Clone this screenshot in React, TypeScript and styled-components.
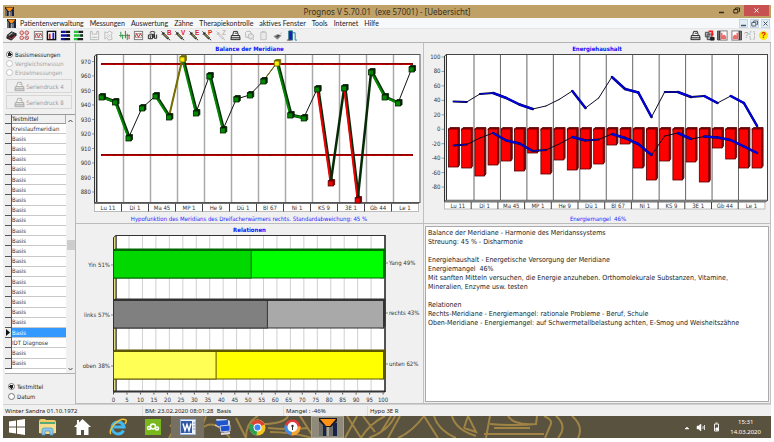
import React, { useState } from 'react';
import styled, { createGlobalStyle } from 'styled-components';

const UI = '"Noto Sans", "Open Sans", sans-serif';
const DIALOG = '"DejaVu Sans Condensed", "DejaVu Sans", sans-serif';

const Global = createGlobalStyle`
  * { box-sizing: border-box; }
  html, body { margin: 0; padding: 0; background: #fff; }
  button, input { font: inherit; color: inherit; margin: 0; padding: 0; }
`;

const Page = styled.div`
  min-height: 100vh;
  padding: 5px 3px 4px;
  display: flex;
  flex-direction: column;
  background: #fff;
  color: #222;
  font-family: ${DIALOG};
  font-size: 7px;
  line-height: 9px;
`;

/* ---------- window frame ---------- */

const TitleBar = styled.header`
  height: 13px;
  display: grid;
  grid-template-columns: 60px 1fr 60px;
  align-items: center;
  background: #bfa168;
  color: #3b3222;
  font-family: ${UI};
`;

const TitleIcon = styled.div`
  padding-left: 2px;
  display: flex;
`;

const Title = styled.h1`
  margin: 0;
  font-size: 8px;
  line-height: 12px;
  font-weight: 400;
  text-align: center;
  white-space: pre;
`;

const Caption = styled.div`
  display: flex;
  align-self: start;
  justify-content: flex-end;
  padding-right: 2px;
`;

const CaptionButton = styled.button<{ $close?: boolean }>`
  width: ${p => (p.$close ? 25 : 15)}px;
  height: 11px;
  border: 0;
  display: flex;
  align-items: center;
  justify-content: center;
  background: ${p => (p.$close ? '#c75050' : 'transparent')};
`;

const MenuBar = styled.nav`
  height: 11px;
  display: flex;
  align-items: center;
  gap: 6px;
  padding: 0 1px 0 4px;
  background: #f6f8fa;
  border-bottom: 1px solid #e6e6e6;
  font-family: Lato, ${UI};
  line-height: 10px;
`;

const MenuIcon = styled.span`
  display: flex;
  margin-right: -2px;
`;

const MenuItem = styled.button`
  border: 0;
  background: none;
  white-space: nowrap;
`;

const ChildCaption = styled.div`
  display: flex;
  gap: 2px;
  margin-left: auto;
`;

const ChildButton = styled.button`
  width: 9px;
  height: 9px;
  display: flex;
  align-items: center;
  justify-content: center;
  border: 1px solid #c3d5e6;
  background: #e3edf6;
`;

const ToolBar = styled.div`
  height: 14px;
  display: flex;
  align-items: center;
  padding: 0 1px 1px 2px;
  background: #f0f0f0;
  border-bottom: 1px solid #b4b4b4;
`;

const ToolGroup = styled.div<{ $width: number; $right?: boolean }>`
  width: ${p => p.$width}px;
  display: flex;
  justify-content: space-between;
  margin-left: ${p => (p.$right ? 'auto' : '0')};
  margin-right: ${p => (p.$right ? 0 : 3)}px;
`;

const Tool = styled.button`
  width: 13px;
  height: 12px;
  border: 0;
  background: none;
  display: flex;
  align-items: center;
  justify-content: center;
`;

/* ---------- body ---------- */

const Body = styled.main`
  flex: 1;
  display: grid;
  grid-template-columns: 73px minmax(0, 348fr) minmax(0, 347fr);
  background: #f0f0f0;
`;

const Side = styled.aside`
  display: flex;
  flex-direction: column;
  border-right: 1px solid #b8b8b8;
  overflow: hidden;
`;

const Radios = styled.fieldset<{ $bottom?: boolean }>`
  margin: 0;
  border: 0;
  min-width: 0;
  padding: ${p => (p.$bottom ? '8px 0 3px 5px' : '7px 0 0 3px')};
  display: flex;
  flex-direction: column;
  gap: ${p => (p.$bottom ? 1 : 0)}px;
`;

const RadioLabel = styled.label<{ $off?: boolean }>`
  display: flex;
  align-items: center;
  gap: 2px;
  height: 9px;
  white-space: nowrap;
  font-size: 6px;
  color: ${p => (p.$off ? '#a3a3a3' : '#222')};
`;

const Radio = styled.input`
  appearance: none;
  flex: none;
  width: 7px;
  height: 7px;
  border: 1px solid #777;
  border-radius: 50%;
  background: #fff;
  &:checked { background: radial-gradient(circle, #222 0 2px, #fff 2px); }
  &:disabled { border-color: #c4c4c4; }
`;

const Prints = styled.div`
  display: flex;
  flex-direction: column;
  gap: 2px;
  padding: 2px 3px 5px;
`;

const PrintButton = styled.button`
  height: 14px;
  display: flex;
  align-items: center;
  justify-content: center;
  gap: 1px;
  border: 1px solid #d6d6d6;
  background: #efefef;
  color: #9a9a9a;
  font-size: 6px;
`;

const ListBox = styled.div`
  display: flex;
  flex: 1;
  margin-left: 2px;
  background: #fff;
  border-top: 1px solid #9a9a9a;
  border-bottom: 1px solid #b0b0b0;
`;

const Table = styled.table`
  flex: 1;
  height: 254px;
  border-collapse: separate;
  border-spacing: 0;
  table-layout: fixed;
  font-size: 6px;
  line-height: 8px;
  th, td { padding: 0; }
`;

const Marker = styled.td`
  width: 7px;
  background: #eee;
  border-right: 1px solid #555;
  border-bottom: 1px solid #555;
`;

const HeadMarker = styled(Marker).attrs({ as: 'th' })``;

const Head = styled.th`
  text-align: left;
  font-weight: 400;
  background: #f0f0f0;
  border-bottom: 1px solid #999;
  border-right: 1px solid #aaa;
`;

const Cell = styled.td<{ $on?: boolean }>`
  white-space: nowrap;
  background: ${p => (p.$on ? '#3399ff' : '#fff')};
  color: ${p => (p.$on ? '#fff' : '#333')};
  border-bottom: 1px solid #c8c8c8;
`;

const ScrollBar = styled.div`
  width: 9px;
  display: flex;
  flex-direction: column;
  align-items: center;
  justify-content: space-between;
  padding: 3px 0 1px;
  background: #f0f0f0;
`;

const Arrow = styled.button`
  width: 9px;
  height: 6px;
  border: 0;
  background: none;
  display: flex;
  align-items: center;
  justify-content: center;
`;

const Thumb = styled.span`
  width: 8px;
  height: 10px;
  background: #cdcdcd;
`;

const Column = styled.div`
  display: grid;
  grid-template-rows: 181fr 180fr;
  min-width: 0;
  border-right: 1px solid #c0c0c0;
`;

const Panel = styled.section`
  min-width: 0;
  display: flex;
  border-bottom: 1px solid #bcbcbc;
`;

const Chart = styled.svg`
  display: block;
  width: 100%;
  height: 100%;
  font-family: ${DIALOG};
  font-size: 6px;
  fill: #333;
`;

const MemoPanel = styled(Panel)`
  padding: 2px 1px 1px 1px;
`;

const Memo = styled.div`
  flex: 1;
  background: #fff;
  border: 1px solid #aaa;
  padding: 2px 2px;
  color: #222;
  p { margin: 0; white-space: pre-line; }
  p + p { margin-top: 9px; }
`;

const StatusBar = styled.footer`
  height: 12px;
  display: grid;
  grid-template-columns: 140px 141px 84px 1fr;
  align-items: center;
  background: #f0f0f0;
  border-top: 1px solid #d0d0d0;
  font-family: ${UI};
  font-size: 6px;
  line-height: 10px;
  white-space: pre;
`;

const StatusCell = styled.span`
  padding-left: 2px;
  border-right: 1px solid #ddd;
  &:last-child { border: 0; }
`;

/* ---------- task bar ---------- */

const TaskBar = styled.div`
  height: 22px;
  display: grid;
  background: #59523f;
  overflow: hidden;
  > * { grid-area: 1 / 1; }
`;

const Ornament = styled.svg`
  height: 22px;
  width: 768px;
`;

const TaskRow = styled.div`
  display: flex;
  align-items: center;
  z-index: 1;
`;

const Task = styled.button<{ $active?: boolean; $open?: boolean }>`
  width: 33px;
  height: 22px;
  margin-right: 2px;
  display: flex;
  align-items: center;
  justify-content: center;
  border: 1px solid ${p => (p.$active ? '#a5a092' : 'transparent')};
  background: ${p => (p.$active ? '#8f8a7a' : p.$open ? '#757061' : 'transparent')};
  &:first-child { width: 28px; margin-right: 0; }
`;

const Tray = styled.div`
  margin-left: auto;
  padding-right: 10px;
  display: flex;
  align-items: center;
  gap: 10px;
  color: #fff;
  font-family: ${UI};
  font-size: 6px;
  line-height: 10px;
  text-align: center;
`;

const TrayIcons = styled.svg`
  width: 36px;
  height: 10px;
`;

/* ---------- icons ---------- */

const Logo = ({ size = 9 }: { size?: number }) => (
  <svg width={size} height={size} viewBox="0 0 18 18">
    <path d="M0 0h18v18H0z" fill="#6f6e68" />
    <path d="M0 0h18v3l-6 6H6L0 3z" fill="#14161f" />
    <path d="M4 7h3v11H4zM14 5h4v13h-4z" fill="#16224a" />
    <path d="M8 9h2v9H8z" fill="#a9a79c" />
    <path d="M1 1h16l-6 7H7z" fill="#ff9114" />
  </svg>
);

const Svg = ({ children, w = 11 }: { children: React.ReactNode; w?: number }) => (
  <svg width={w} height={w} viewBox="0 0 12 12" fill="none" stroke="#222" strokeWidth="1">{children}</svg>
);

const Printer = ({ c = '#222', w = 11 }: { c?: string; w?: number }) => (
  <Svg w={w}>
    <path d="M3 5.5L4 1.5h4l1 4" stroke={c} fill="#fff" />
    <path d="M1.5 6h9l.5 4.5H1z" stroke={c} fill="#ddd" />
    <path d="M1 8.5h10M5 3.5h3" stroke={c} />
  </Svg>
);

const Syringe = ({ letter, color, c = '#222' }: { letter: string; color: string; c?: string }) => (
  <Svg>
    <path d="M0.5 1.5l2 2" stroke={c} />
    <path d="M2 3.500l6 6" stroke={c} strokeWidth="2.500" />
    <path d="M3 4.500l4.500 4.500" stroke={c === '#222' ? '#d9d36a' : '#fff'} strokeWidth="1" />
    <path d="M8 9.500l2 1.500M1 5L3.500 2.500" stroke={c} strokeWidth="1" />
    <text x="6.500" y="5.500" fontSize="7" fontWeight="700" fill={color} stroke="none" fontFamily="Liberation Sans, sans-serif">{letter}</text>
  </Svg>
);

const Bars = ({ a, b }: { a: string; b: string }) => (
  <Svg>
    <path d="M1 2h5M1 6h8M1 10h5" stroke={a} strokeWidth="2.500" />
    <path d="M6 2h5M8 6h3M5 10h6" stroke={b} strokeWidth="2.500" />
  </Svg>
);

const GraphIcon = () => (
  <Svg>
    <rect x="1.500" y="1.500" width="9" height="9" fill="#f7f7f7" stroke="#777" />
    <path d="M1 4h10M1 8h10" stroke="#999" />
    <path d="M2 8l2-4 2 4 2-4 2 3" stroke="#c92b2b" />
  </Svg>
);

const DoorIcon = ({ flip = false }: { flip?: boolean }) => (
  <Svg>
    <rect x="1" y="1" width="10" height="10" fill="#fff" stroke="#777" />
    <path d={flip ? 'M9 1v10M11 1v10' : 'M1 1v10M3 1v10'} stroke="#333" strokeWidth="1.500" />
    <path d={flip ? 'M2 10V7l2-2 2 1V3h2v7z' : 'M4 10V3h2v3l2-1 2 2v3z'} fill="#ee6b6b" stroke="none" />
  </Svg>
);

const leftTools: [string, React.ReactNode][] = [
  ['Patient', <Svg><path d="M1 6l5-4 5 2-5 5z" fill="#444" /><path d="M1 7v2l5 2 5-5V4" fill="#222" /><path d="M3 8l3 1.500L10 6" stroke="#d34" /><path d="M3 6l4-3" stroke="#ccc" /></Svg>],
  ['Zellen', <Svg><g stroke="#c24b4b" fill="#e9c9c9"><circle cx="3" cy="3" r="2" /><circle cx="8.500" cy="3" r="2" /><circle cx="3" cy="8.500" r="2" /><circle cx="8.500" cy="8.500" r="2" /></g><path d="M3 3v0M8 8l1 1" stroke="#357" /></Svg>],
  ['Kurve', <GraphIcon />],
  ['Balken', <Svg><rect x="1.500" y="1.500" width="9" height="9" fill="#fff" stroke="#111" strokeWidth="1.500" /><path d="M4 10V4" stroke="#c22" strokeWidth="2" /><path d="M8 10V3" stroke="#22c" strokeWidth="2" /></Svg>],
  ['Relationen', <Bars a="#11119a" b="#111" />],
  ['Vergleich', <Bars a="#22c53a" b="#222" />],
];
const midTools: [string, React.ReactNode][] = [
  ['Speichern', <Svg><path d="M1.500 1.500h2v3h5v-3h2v9h-9z" stroke="#b8b8b8" /><path d="M3 8h6" stroke="#b8b8b8" /></Svg>],
  ['Zahn', <Svg><path d="M2 2l3 1 2-2 3 2-1 3 1 4-4 1-2-3-2 2z" stroke="#bbb" /><path d="M5 4l3 3M4 6l3 2" stroke="#c8c8c8" /></Svg>],
];
const mainTools: [string, React.ReactNode][] = [
  ['Messung', <Svg><path d="M0 6h12" stroke="#5aa868" /><path d="M2 2v6M4 5v5M9 4v7" stroke="#1f8c35" /><path d="M7 1v8M11 5v5" stroke="#b33" /></Svg>],
  ['Verlauf', <GraphIcon />],
  ['Suche', <Svg><path d="M1.500 5v4.500h3M3 4.500h3v5h-2zM8 3v6h2.500V5" /><path d="M3 2.500l3-1 3 1" /><circle cx="7" cy="6.500" r="1.500" fill="#555" /></Svg>],
  ['Spritze B', <Syringe letter="B" color="#d22" />],
  ['Spritze V', <Syringe letter="V" color="#d22" />],
  ['Spritze E', <Syringe letter="E" color="#d22" />],
  ['Spritze P', <Syringe letter="P" color="#d22" />],
  ['Spritze Z', <Syringe letter="Z" color="#bbb" c="#bbb" />],
  ['Drucken', <Printer />],
  ['Kopieren', <Svg><path d="M1.500 3L3 1.500h4L8 4v4H2z" stroke="#b5b5b5" /><circle cx="7.500" cy="7" r="3" stroke="#b5b5b5" fill="#e4e4e4" /><path d="M9 9l2 2" stroke="#b5b5b5" /></Svg>],
  ['Ablage', <Svg><path d="M3 2.500h6v8H3zM4 1.500h4" stroke="#c0c0c0" fill="#e9e9e9" /></Svg>],
  ['Testen', <Svg><path d="M2 7l4-2 4 1-4 4z" fill="#777" stroke="#999" /><path d="M5 7l3-1" stroke="#222" /><path d="M9 4l2-1" stroke="#bbb" /></Svg>],
  ['Beenden', <Svg><path d="M3 1h4v10H3z" fill="#201ab0" stroke="#187878" /><path d="M7 3h3v8h2" stroke="#27a" /><path d="M1 11h3" stroke="#b22" /></Svg>],
];
const rightTools: [string, React.ReactNode][] = [
  ['Drucken', <Printer />],
  ['Export', <Svg><path d="M1.500 2.500h4v5h-4zM3.500 4.500h5v6h-5z" fill="#bbb" stroke="#444" /><path d="M5 1.500h4v4" stroke="#e22" strokeWidth="2" /><path d="M7 4l2 3 2-3z" fill="#e22" stroke="none" /><path d="M7 8h4v3H7z" fill="#222" /></Svg>],
  ['Links', <DoorIcon />],
  ['Rechts', <DoorIcon flip />],
  ['Kontext', <Svg><text x="0" y="9" fontSize="9" fill="#999" stroke="none" fontFamily="Liberation Sans, sans-serif">?</text><path d="M8 2H6.500v8H8M10 2h1.500v8H10" stroke="#aaa" strokeDasharray="2 1" /></Svg>],
  ['Hilfe', <Svg><circle cx="6" cy="6" r="4.500" fill="#ffee00" stroke="#f4d800" strokeWidth=".5" /><text x="6" y="9" textAnchor="middle" fontSize="9" fontWeight="700" fill="#e01010" stroke="none" fontFamily="Liberation Sans, sans-serif">?</text></Svg>],
];

/* ---------- charts ---------- */

const meridians = ['Lu 11', 'Di 1', 'Ma 45', 'MP 1', 'He 9', 'Dü 1', 'Bl 67', 'Ni 1', 'KS 9', '3E 1', 'Gb 44', 'Le 1'];

const balanceY = [97, 102, 138, 108, 96, 117, 59, 113, 76, 130, 99, 95, 81, 63, 115, 118, 89, 183, 88, 200, 72, 97, 103, 69];
const energyY = [101.5, 102, 94, 93, 98, 104.5, 109, 106, 99.5, 91, 108, 98, 77, 89, 92.5, 117, 92, 92, 97, 96, 103, 96, 103, 126];
const deficitY = [145.5, 144.500, 138, 133, 140.5, 143.5, 151, 150, 144, 137, 140.5, 139.5, 134, 138, 144, 155, 136, 133, 139, 136.5, 137.5, 140, 146.5, 153];
const barY = [167, 168, 176, 165, 161, 171, 153, 174, 160, 170, 169, 164, 145, 144, 168, 180, 161, 180, 162, 182, 148, 159, 168, 168];

const bx = (i: number) => 101.5 + i * 13.48;
const ex = (i: number) => 453.5 + i * 13.2;

const AxisBoxes = ({ x, y, step, h }: { x: number; y: number; step: number; h: number }) => (
  <g>
    <rect x={x} y={y} width={step * 12} height={h} fill="#fff" stroke="#bbb" />
    {meridians.map((m, i) => (
      <g key={m}>
        {i > 0 && <path d={`M${x + i * step} ${y}v${h}`} stroke="#444" />}
        <text x={x + (i + 0.5) * step} y={y + h / 2 + 2} textAnchor="middle">{m}</text>
      </g>
    ))}
  </g>
);

const BalanceChart = () => {
  const segs = balanceY.slice(1).map((y, i) => {
    const down = y > balanceY[i];
    const yellow = i === 5 || i === 12;
    const red = i === 16 || i === 18;
    const steep = i === 17 || i === 19;
    const d = `M${bx(i)} ${balanceY[i]}L${bx(i + 1)} ${y}`;
    return (
      <g key={i} fill="none">
        <path d={d} stroke={down || steep ? '#062a06' : '#111'} strokeWidth={down ? 3 : steep ? 2.5 : 1} transform={down ? 'translate(1 0)' : undefined} />
        {down && <path d={d} stroke={red ? '#f00000' : '#008a00'} strokeWidth="2" />}
        {yellow && <path d={d} stroke="#777000" strokeWidth={i === 5 ? 2 : 1} />}
      </g>
    );
  });
  return (
    <Chart viewBox="76 43 347 179" preserveAspectRatio="xMidYMin meet" role="img" aria-label="Balance der Meridiane">
      <text x="249.500" y="50.500" textAnchor="middle" fontWeight="700" fill="#1010ff">Balance der Meridiane</text>
      <rect x="97" y="54.500" width="323" height="148" fill="#fff" stroke="#555" />
      {meridians.slice(1).map((m, i) => <path key={m} d={`M${123.500 + i * 27} 55v147`} stroke="#aaa" strokeWidth="1.500" />)}
      <path d="M94.500 56l2-1.500V202l-2 1z" fill="#f5f087" stroke="#333" />
      {[970, 960, 950, 940, 930, 920, 910, 900, 890, 880].map((v, i) => (
        <g key={v}>
          <text x="91" y={63.5 + i * 14.5} textAnchor="end">{v}</text>
          <path d={`M92 ${61.5 + i * 14.5}h2`} stroke="#999" />
        </g>
      ))}
      <AxisBoxes x={94.5} y={203.5} step={27} h={8} />
      <path d="M94 203h325" stroke="#555" strokeWidth="1.500" />
      {[64.5, 155.5].map(y => (
        <g key={y}>
          <path d={`M101 ${y - 0.5}h312`} stroke="#8c0000" strokeWidth="2" />
          <path d={`M102 ${y}h311`} stroke="#c00000" strokeWidth="1" strokeDasharray="11 2" />
        </g>
      ))}
      {segs}
      {balanceY.map((y, i) => {
        const c = i === 6 || i === 13 ? ['#fff000', '#6d6600'] : i === 17 || i === 19 ? ['#f00000', '#600000'] : ['#008a00', '#022002'];
        return (
          <g key={i} stroke={c[1]} strokeWidth=".8">
            <path d={`M${bx(i) - 2.5} ${y - 2}l1.500 -1.500h5v5l-1.500 1.500z`} fill={c[1]} />
            <rect x={bx(i) - 2.5} y={y - 2} width="5" height="5" fill={c[0]} />
          </g>
        );
      })}
      <text x="249" y="221" textAnchor="middle" fill="#2626ff">Hypofunktion des Meridians des Dreifacherwärmers rechts. Standardabweichung: 45 %</text>
    </Chart>
  );
};

const Ribbon = ({ ys }: { ys: number[] }) => (
  <g fill="none" strokeLinecap="round">
    {ys.slice(1).map((y, i) => {
      const d = `M${ex(i)} ${ys[i]}L${ex(i + 1)} ${y}`;
      const down = y > ys[i] + 0.8;
      const flat = Math.abs(y - ys[i]) <= 1.6;
      return (
        <g key={i}>
          <path d={d} stroke="#0a0a28" strokeWidth={down ? 2.5 : flat ? 2 : 1} />
          {(down || flat) && <path d={d} stroke="#0000e0" strokeWidth={down ? 2 : 1} />}
        </g>
      );
    })}
  </g>
);

const EnergyChart = () => (
  <Chart viewBox="424 43 346 179" preserveAspectRatio="xMidYMin meet" role="img" aria-label="Energiehaushalt">
    <text x="597" y="50.500" textAnchor="middle" fontWeight="700" fill="#1010ff">Energiehaushalt</text>
    <rect x="446.500" y="54.500" width="321" height="146" fill="#fff" stroke="#444" />
    {meridians.slice(1).map((m, i) => <path key={m} d={`M${474 + i * 26.45} 55v146`} stroke="#666" />)}
    <path d="M444.500 56l2-1.500V200l-2 2z" fill="#f5f087" stroke="#333" />
    {[100, 80, 60, 40, 20, 0, -20, -40, -60, -80].map((v, i) => (
      <g key={v}>
        <text x="440.500" y={59 + i * 14.45} textAnchor="end">{v}</text>
        <path d={`M441.500 ${57 + i * 14.45}h2.500`} stroke="#999" />
      </g>
    ))}
    <AxisBoxes x={444.5} y={202} step={26.7} h={7} />
    <path d="M446 200h322l-2 2H444z" fill="#888" stroke="#555" strokeWidth=".5" />
    {barY.map((b, i) => {
      const x = ex(i) - 5;
      return (
        <g key={i} stroke="#500000" strokeWidth=".8">
          <path d={`M${x} 129l1.500 -1.500h9.500V${b - 2}l-1.500 2z`} fill="#900000" />
          <rect x={x} y="129" width="9.500" height={b - 129} fill="#ff0000" />
        </g>
      );
    })}
    <Ribbon ys={energyY} />
    <Ribbon ys={deficitY} />
    <text x="598" y="221" textAnchor="middle" fill="#2626ff" xmlSpace="preserve">Energiemangel  46%</text>
  </Chart>
);

const relations = [
  { y: 250.5, l: 'Yin 51%', r: 'Yang 49%', split: 51, a: '#00d800', b: '#00ff00', dark: '#006800' },
  { y: 300.5, l: 'links 57%', r: 'rechts 43%', split: 57, a: '#808080', b: '#a9a9a9', dark: '#333333' },
  { y: 351.5, l: 'oben 38%', r: 'unten 62%', split: 38, a: '#ffff55', b: '#ffff00', dark: '#5c5600' },
];

const RelationChart = () => (
  <Chart viewBox="76 224 347 179" preserveAspectRatio="xMidYMin meet" role="img" aria-label="Relationen">
    <text x="249.500" y="231.500" textAnchor="middle" fontWeight="700" fill="#1010ff">Relationen</text>
    <rect x="116" y="235.500" width="269" height="156" fill="#fff" stroke="#333" />
    {Array.from({ length: 19 }, (_, i) => <path key={i} d={`M${129 + i * 13.45} 236v155`} stroke="#d0d0d0" />)}
    <path d="M113.500 237.500l2.500-2V391l-2.500 1.500z" fill="#e0da80" stroke="#333" />
    <path d="M113 391.500h272" stroke="#333" strokeWidth="2" />
    <path d="M385 235v157" stroke="#111" />
    {relations.map(r => {
      const split = 113.5 + r.split * 2.7;
      return (
        <g key={r.l}>
          <path d={`M113.500 ${r.y}l1.500-1.500h270v27l-1.500 2z`} fill={r.dark} stroke={r.dark} />
          <rect x="113.500" y={r.y} width="270" height="27.500" fill={r.b} stroke={r.dark} />
          <rect x="113.500" y={r.y} width={split - 113.5} height="27.500" fill={r.a} stroke={r.dark} />
          <text x="110" y={r.y + 16.5} textAnchor="end">{r.l}</text>
          <text x="389" y={r.y + 14.5}>{r.r}</text>
          <path d={`M111 ${r.y + 14.5}h2M386 ${r.y + 12.5}h2`} stroke="#888" />
        </g>
      );
    })}
    {Array.from({ length: 21 }, (_, i) => (
      <g key={i}>
        <path d={`M${113.5 + i * 13.48} 392.500v2`} stroke="#555" />
        <text x={113.5 + i * 13.48} y="401.500" textAnchor="middle">{i * 5}</text>
      </g>
    ))}
  </Chart>
);

/* ---------- page ---------- */

const tests = ['Kreislaufmeridian', ...Array(19).fill('Basis'), 'Basis', 'IDT Diagnose', 'Basis', 'Basis'];
const menus = ['Patientenverwaltung', 'Messungen', 'Auswertung', 'Zähne', 'Therapiekontrolle', 'aktives Fenster', 'Tools', 'Internet', 'Hilfe'];

const Tools = ({ items, width, right }: { items: [string, React.ReactNode][]; width: number; right?: boolean }) => (
  <ToolGroup $width={width} $right={right}>
    {items.map(([name, icon]) => <Tool key={name} aria-label={name}>{icon}</Tool>)}
  </ToolGroup>
);

const MinGlyph = ({ c }: { c: string }) => <svg width="7" height="7"><path d="M1 5.500h5" stroke={c} strokeWidth="1.500" /></svg>;
const RestoreGlyph = ({ c }: { c: string }) => <svg width="7" height="7"><path d="M2.500 2V1h4v3.500h-1M.8 2.500h4v3.500h-4z" fill="none" stroke={c} /></svg>;
const CloseGlyph = ({ c }: { c: string }) => <svg width="7" height="7"><path d="M1.500 1.500l4 4M5.500 1.500l-4 4" stroke={c} /></svg>;

const tasks: { name: string; open?: boolean; active?: boolean; icon: React.ReactNode }[] = [
  { name: 'Start', icon: <svg width="16" height="16" viewBox="0 0 16 16" fill="#fff"><path d="M0 2.500l7-1v6H0zM8 1.300L16 0v7.500H8zM0 8.500h7v6l-7-1zM8 8.500h8V16l-8-1.300z" /></svg> },
  { name: 'Explorer', icon: <svg width="19" height="18" viewBox="0 0 19 18"><path d="M1 3q0-2 2-2h4l1 1h8q2 0 2 2v11H1z" fill="#eecb66" /><path d="M2 4h15v2H2z" fill="#5aa876" /><path d="M1 6h17v9q-8 2-17 0z" fill="#f6dd8e" /><path d="M4 17v-5q0-2 2-2h7q2 0 2 2v5h-3v-4H7v4z" fill="#8cc8ea" stroke="#4a93c4" strokeWidth=".7" /></svg> },
  { name: 'Home', icon: <svg width="17" height="16" viewBox="0 0 17 16"><path d="M8.500 0L17 8h-2.500v8H10v-5H7v5H2.500V8H0l3-3V1h2v2.500z" fill="#fff" /></svg> },
  { name: 'Internet Explorer', icon: <svg width="18" height="18" viewBox="0 0 18 18" fill="none"><path d="M14.500 12.500A6 6 0 1 1 15 9H5" stroke="#42b8ee" strokeWidth="3" /><path d="M2 16C-2 12 11-2 17 2q1 1-1 4" stroke="#f2c032" strokeWidth="1.500" /></svg> },
  { name: 'Cloud', icon: <svg width="16" height="16" viewBox="0 0 16 16"><rect width="16" height="16" fill="#78b81c" /><g fill="none" stroke="#fff" strokeWidth="1.500"><circle cx="4" cy="9" r="1.500" /><circle cx="8" cy="7.500" r="2.500" /><circle cx="12" cy="9.500" r="1.500" /></g></svg> },
  { name: 'Word', open: true, icon: <svg width="16" height="16" viewBox="0 0 16 16"><rect x=".5" y=".5" width="15" height="15" fill="#eef3fb" stroke="#9eb6da" /><rect x="1" y="2" width="11" height="12" fill="#315aa5" /><path d="M13 4h2M13 7h2M13 10h2" stroke="#7f9bc9" /><path d="M3 4.500l2 7 2-6 2 6 2-7" fill="none" stroke="#fff" strokeWidth="1.500" /></svg> },
  { name: 'Remote', icon: <svg width="18" height="18" viewBox="0 0 18 18"><path d="M2 1h10l4 2v4H4z" fill="#c9d4e4" /><path d="M2 3l12-1v7L3 8z" fill="#2055d0" /><path d="M1 7l4 2" stroke="#dde4ee" /><path d="M6 8l10-1v6l-9 1z" fill="#1e4fd0" stroke="#c6d0dd" /><path d="M7 16l9-1" stroke="#dde" strokeWidth="2" /></svg> },
  { name: 'Chrome', icon: <svg width="17" height="17" viewBox="0 0 17 17"><circle cx="8.500" cy="8.500" r="8" fill="#f4c51d" /><path d="M8.500 8.500L1.500 4.500a8 8 0 0 1 14.200 1z" fill="#db4437" /><path d="M8.500 8.500L1.500 4.500A8 8 0 0 0 7.500 16.400z" fill="#27a158" /><circle cx="8.500" cy="8.500" r="4" fill="#fff" /><circle cx="8.500" cy="8.500" r="3" fill="#4285f4" /></svg> },
  { name: 'Browser', icon: <svg width="17" height="17" viewBox="0 0 17 17"><circle cx="8.500" cy="8.500" r="8" fill="#e23b3b" /><path d="M8.500 8.500L.8 6A8 8 0 0 0 7.500 16.500z" fill="#3f8fe0" /><path d="M8.500 8.500L7.500 16.500A8 8 0 0 0 16.400 7z" fill="#f2a735" /><circle cx="8.500" cy="8" r="5" fill="#fff" /><circle cx="8.500" cy="7" r="1.200" fill="#333" /><path d="M8.500 7v4" stroke="#333" /></svg> },
  { name: 'Prognos', active: true, icon: <Logo size={18} /> },
];

export default function App() {
  const [kind, setKind] = useState('basis');
  const [sort, setSort] = useState('test');
  const [row, setRow] = useState(20);
  return (
    <Page>
      <Global />
      <TitleBar>
        <TitleIcon><Logo /></TitleIcon>
        <Title>Prognos V 5.70.01  (exe 57001) - [Uebersicht]</Title>
        <Caption>
          <CaptionButton aria-label="Minimieren"><MinGlyph c="#332b1a" /></CaptionButton>
          <CaptionButton aria-label="Wiederherstellen"><RestoreGlyph c="#332b1a" /></CaptionButton>
          <CaptionButton $close aria-label="Schließen"><CloseGlyph c="#fff" /></CaptionButton>
        </Caption>
      </TitleBar>
      <MenuBar>
        <MenuIcon><Logo /></MenuIcon>
        {menus.map(m => <MenuItem key={m}>{m}</MenuItem>)}
        <ChildCaption>
          <ChildButton aria-label="Fenster minimieren"><MinGlyph c="#456" /></ChildButton>
          <ChildButton aria-label="Fenster wiederherstellen"><RestoreGlyph c="#567" /></ChildButton>
          <ChildButton aria-label="Fenster schließen"><CloseGlyph c="#456" /></ChildButton>
        </ChildCaption>
      </MenuBar>
      <ToolBar>
        <Tools items={leftTools} width={80} />
        <Tools items={midTools} width={27} />
        <Tools items={mainTools} width={180} />
        <Tools items={rightTools} width={81} right />
      </ToolBar>
      <Body>
        <Side>
          <Radios aria-label="Messungen">
            <RadioLabel><Radio type="radio" name="kind" checked={kind === 'basis'} onChange={() => setKind('basis')} />Basismessungen</RadioLabel>
            <RadioLabel $off><Radio type="radio" name="kind" disabled />Vergleichsmessun</RadioLabel>
            <RadioLabel $off><Radio type="radio" name="kind" disabled />Einzelmessungen</RadioLabel>
          </Radios>
          <Prints>
            <PrintButton><Printer c="#aaa" />Seriendruck 4</PrintButton>
            <PrintButton><Printer c="#aaa" />Seriendruck 8</PrintButton>
          </Prints>
          <ListBox>
            <Table>
              <thead><tr><HeadMarker /><Head>Testmittel</Head></tr></thead>
              <tbody>
                {tests.map((t, i) => (
                  <tr key={i} onClick={() => setRow(i)}>
                    <Marker>{i === row && <svg width="5" height="7" viewBox="0 0 5 7" display="block"><path d="M1 0l4 3.500-4 3.500z" fill="#111" /></svg>}</Marker>
                    <Cell $on={i === row}>{t}</Cell>
                  </tr>
                ))}
              </tbody>
            </Table>
            <ScrollBar>
              <Arrow aria-label="Nach oben"><svg width="5" height="4"><path d="M.5 3l2-2 2 2" fill="none" stroke="#444" /></svg></Arrow>
              <Thumb />
              <Arrow aria-label="Nach unten"><svg width="5" height="4"><path d="M.5 1l2 2 2-2" fill="none" stroke="#444" /></svg></Arrow>
            </ScrollBar>
          </ListBox>
          <Radios $bottom aria-label="Sortierung">
            <RadioLabel><Radio type="radio" name="sort" checked={sort === 'test'} onChange={() => setSort('test')} />Testmittel</RadioLabel>
            <RadioLabel><Radio type="radio" name="sort" checked={sort === 'date'} onChange={() => setSort('date')} />Datum</RadioLabel>
          </Radios>
        </Side>
        <Column>
          <Panel><BalanceChart /></Panel>
          <Panel><RelationChart /></Panel>
        </Column>
        <Column>
          <Panel><EnergyChart /></Panel>
          <MemoPanel>
            <Memo>
              <p>{'Balance der Meridiane - Harmonie des Meridanssystems\nStreuung: 45 % - Disharmonie'}</p>
              <p>{'Energiehaushalt - Energetische Versorgung der Meridiane\nEnergiemangel\u00a0 46%\nMit sanften Mitteln versuchen, die Energie anzuheben. Orthomolekurale Substanzen, Vitamine,\nMineralien, Enzyme usw. testen'}</p>
              <p>{'Relationen\nRechts-Meridiane - Energiemangel: rationale Probleme - Beruf, Schule\nOben-Meridiane - Energiemangel: auf Schwermetallbelastung achten, E-Smog und Weisheitszähne'}</p>
            </Memo>
          </MemoPanel>
        </Column>
      </Body>
      <StatusBar>
        <StatusCell>Winter Sandra 01.10.1972</StatusCell>
        <StatusCell>BM: 23.02.2020 08:01:28  Basis</StatusCell>
        <StatusCell>Mangel : -46%</StatusCell>
        <StatusCell>Hypo 3E R</StatusCell>
      </StatusBar>
      <TaskBar>
        <Ornament viewBox="3 416 768 22" fill="none" stroke="#a08446" strokeWidth="2" aria-hidden="true">
          <path d="M172 416l5 8-8 14M170 425l12 13M206 416l-8 22M200 430q14-14 30 8M236 418l10 20M246 438q0-16 12-22M262 424q22 0 26-8M268 428q20 2 40 0M270 432q22 0 42 6M300 416l14 22M345 438l12-22M347 416l14 22M361 438q8-14 24-22M363 416l12 16M369 438q20-8 26-22M381 432l10-16M388 438l12-22M398 438q14-6 26-22M424 416l14 22M434 416q4 14 22 22M452 416q4 14 24 20M464 428l4-12 8 16-12-4M486 438l4-22M484 434h60M490 424q26 2 46 0M508 416q6 10 28 8l1-8M494 428h36M545 438l5-12q4-6-6-10M556 416q12 10 2 22M572 416q12 10 6 22" />
        </Ornament>
        <TaskRow>
          {tasks.map(t => <Task key={t.name} aria-label={t.name} $open={t.open} $active={t.active}>{t.icon}</Task>)}
          <Tray>
            <TrayIcons viewBox="0 0 36 10" fill="none" stroke="#fff">
              <path d="M1 7l2-2 2 2z" fill="#fff" strokeWidth=".5" />
              <path d="M13 4h1.500L17 2v7l-2.500-2H13z" fill="#fff" strokeWidth=".5" />
              <path d="M19 4v3M20.500 3v5" strokeWidth=".8" />
              <path d="M30.500 2h4v7h-4zM31.500 1h2" strokeWidth=".9" /><path d="M32 6h2v2h-2z" fill="#fff" />
            </TrayIcons>
            <span>15:31<br />14.03.2020</span>
          </Tray>
        </TaskRow>
      </TaskBar>
    </Page>
  );
}
